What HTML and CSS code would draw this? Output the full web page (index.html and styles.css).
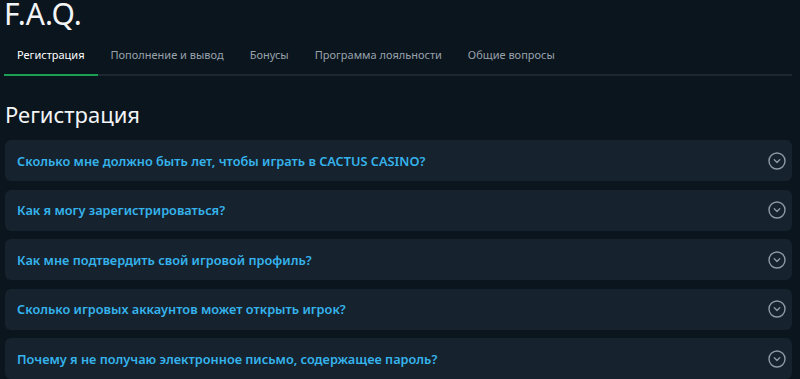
FILE: index.html
```html
<!DOCTYPE html>
<html lang="ru">
<head>
<meta charset="utf-8">
<title>F.A.Q.</title>
<link rel="stylesheet" href="styles.css">
</head>
<body>
<main class="page">
  <h1 class="title">F.A.Q.</h1>
  <nav class="tabs">
    <a class="tab active">Регистрация</a>
    <a class="tab">Пополнение и вывод</a>
    <a class="tab">Бонусы</a>
    <a class="tab">Программа лояльности</a>
    <a class="tab">Общие вопросы</a>
  </nav>
  <h2 class="section">Регистрация</h2>
  <ul class="faq">
    <li class="item"><span class="q">Сколько мне должно быть лет, чтобы играть в CACTUS CASINO?</span><svg class="chev" viewBox="0 0 18 18"><circle cx="9" cy="9" r="8" /><path d="M6.3 7.8 L9 10.4 L11.7 7.8" /></svg></li>
    <li class="item"><span class="q">Как я могу зарегистрироваться?</span><svg class="chev" viewBox="0 0 18 18"><circle cx="9" cy="9" r="8" /><path d="M6.3 7.8 L9 10.4 L11.7 7.8" /></svg></li>
    <li class="item"><span class="q">Как мне подтвердить свой игровой профиль?</span><svg class="chev" viewBox="0 0 18 18"><circle cx="9" cy="9" r="8" /><path d="M6.3 7.8 L9 10.4 L11.7 7.8" /></svg></li>
    <li class="item"><span class="q">Сколько игровых аккаунтов может открыть игрок?</span><svg class="chev" viewBox="0 0 18 18"><circle cx="9" cy="9" r="8" /><path d="M6.3 7.8 L9 10.4 L11.7 7.8" /></svg></li>
    <li class="item"><span class="q">Почему я не получаю электронное письмо, содержащее пароль?</span><svg class="chev" viewBox="0 0 18 18"><circle cx="9" cy="9" r="8" /><path d="M6.3 7.8 L9 10.4 L11.7 7.8" /></svg></li>
  </ul>
</main>
</body>
</html>
```
FILE: styles.css
```css
html, body {
  margin: 0;
  padding: 0;
  background: #0b151e;
}
body {
  font-family: "Noto Sans", "Open Sans", sans-serif;
  color: #ffffff;
}
.page {
  padding: 0 8px 0 4px;
}
.title {
  margin: 0;
  padding-top: 0;
  font-size: 30px;
  line-height: 28px;
  font-weight: 400;
  color: #f2f4f5;
}
.tabs {
  display: flex;
  margin-top: 12px;
  border-bottom: 2px solid #1c2731;
}
.tab {
  display: block;
  padding: 0 13px;
  height: 34px;
  line-height: 30px;
  font-size: 11px;
  color: #98a2ab;
  margin-bottom: -2px;
  border-bottom: 2px solid transparent;
}
.tab.active {
  color: #ffffff;
  border-bottom-color: #1d9e55;
}
.section {
  margin: 0;
  padding-top: 23px;
  padding-left: 1px;
  font-size: 22px;
  line-height: 30px;
  font-weight: 400;
  color: #f2f4f5;
}
.faq {
  list-style: none;
  margin: 11px 0 0;
  padding: 0 0 0 1px;
  display: flex;
  flex-direction: column;
  gap: 8.5px;
}
.item {
  height: 41px;
  box-sizing: border-box;
  display: flex;
  align-items: center;
  justify-content: space-between;
  padding: 0 6px 0 12px;
  background: #16222d;
  border-radius: 6px;
}
.q {
  font-size: 12.75px;
  font-weight: 600;
  color: #35b3ec;
}
.chev {
  width: 18px;
  height: 18px;
  fill: none;
  stroke: #8d99a3;
  stroke-width: 1.4;
  stroke-linecap: round;
  stroke-linejoin: round;
}
```
